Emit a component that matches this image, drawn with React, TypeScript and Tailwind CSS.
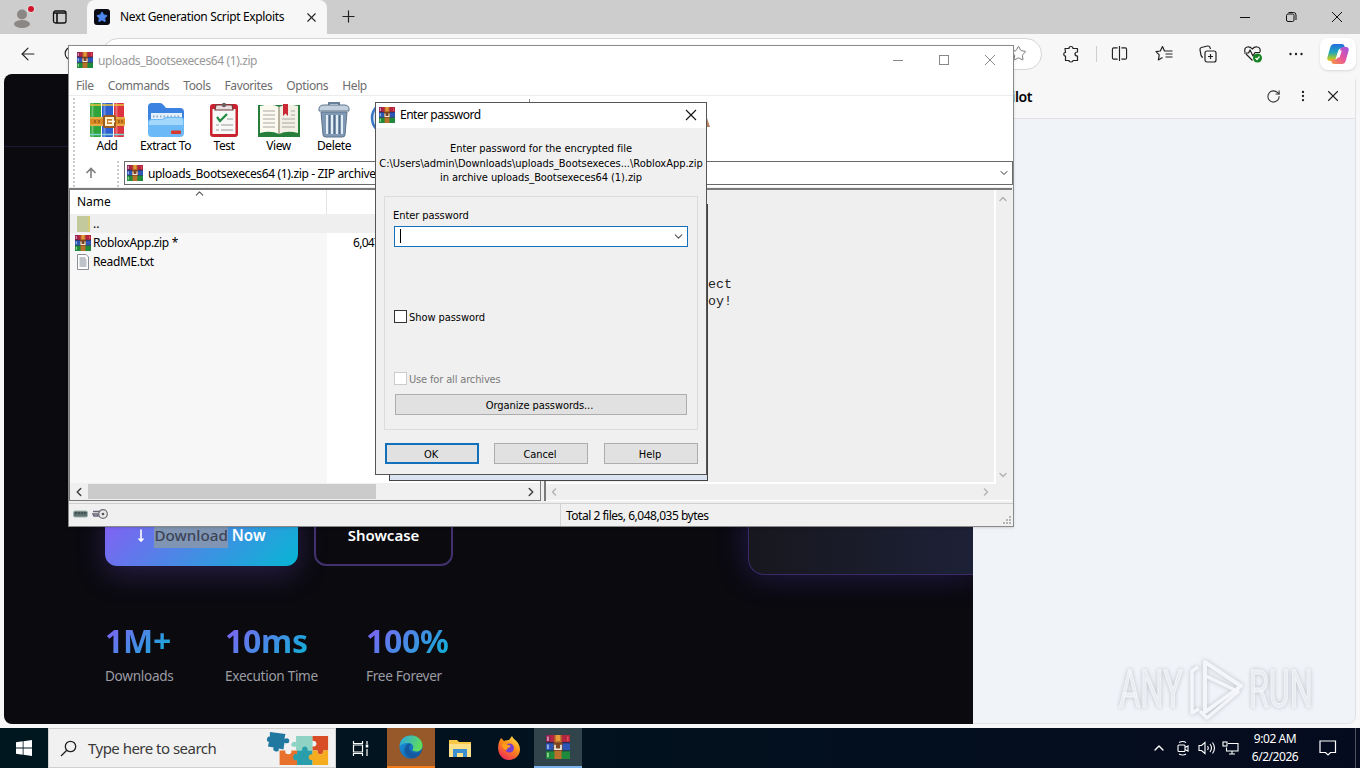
import React from 'react';
import { Star, X, Plus, ArrowLeft, ChevronDown, ChevronUp, ChevronLeft, ChevronRight, RotateCw, EllipsisVertical } from 'lucide-react';

interface IconProps {
  className?: string;
}

const RarIcon: React.FC<IconProps> = ({ className }) => (
  <svg viewBox="0 0 16 16" className={className}>
    <rect x="0" y="0" width="16" height="5" fill="#b3263f" />
    <rect x="0" y="5" width="16" height="5.5" fill="#2c55b5" />
    <rect x="0" y="10.5" width="16" height="5.5" fill="#1f8a3c" />
    <rect x="0" y="0" width="3" height="5" fill="#8f2157" />
    <rect x="0" y="4.8" width="16" height="0.7" fill="#23233f" />
    <rect x="0" y="10.2" width="16" height="0.7" fill="#173a3a" />
    <rect x="0.8" y="1" width="1" height="3" fill="#e9a9b5" />
    <rect x="0.8" y="6.3" width="1" height="3" fill="#a9c6f5" />
    <rect x="0.8" y="11.8" width="1" height="3" fill="#a6e0a0" />
    <rect x="14" y="1" width="1" height="3.2" fill="#e04b57" />
    <rect x="5.6" y="0" width="4.8" height="16" fill="#b8702a" />
    <rect x="6.6" y="0" width="2.8" height="4" fill="#e49a35" />
    <rect x="5" y="5" width="6" height="5.6" fill="#7c4522" />
    <path d="M6 6.500v3h4v-3" fill="none" stroke="#f3eee2" strokeWidth="1.100" />
  </svg>
);

const BooksIcon = () => (
  <svg viewBox="0 0 36 36" className="h-9 w-9">
    <rect x="1" y="1" width="11" height="34" rx="1" fill="#2fa43a" />
    <rect x="13" y="1" width="11" height="34" rx="1" fill="#2c5fd0" />
    <rect x="25" y="1" width="10" height="34" rx="1" fill="#dd3340" />
    <path d="M3.500 1v34M27.500 1v34M15.500 1v34" stroke="#fff" strokeOpacity=".3" strokeWidth="2" />
    <path d="M1 3h11M25 3h10M13 3h11" stroke="#e8c33b" strokeWidth="1.600" />
    <path d="M1 32.500h11M13 32.500h11M25 32.500h10" stroke="#7fd2d8" strokeWidth="1.600" />
    <rect x="1" y="15" width="35" height="9" rx="1" fill="#d98a26" />
    <path d="M1 16h35M1 23h35" stroke="#f6c860" strokeWidth="1.200" />
    <rect x="14" y="13" width="13" height="13" rx="2" fill="#9a5b1c" />
    <rect x="17" y="16" width="7" height="7" fill="#c47d28" stroke="#fff3cf" strokeWidth="2" />
    <path d="M19 19.500h7" stroke="#fff8e8" strokeWidth="1.600" />
    <path d="M6 18v3M10 18v3M30 18v3M33 18v3" stroke="#7b4512" strokeWidth="1" />
  </svg>
);

const ExtractIcon = () => (
  <svg viewBox="0 0 38 36" className="h-9 w-[38px]">
    <path d="M1 5q0-4 4-4h8q2 0 3.500 2L19 6h14q4 0 4 4v12H1z" fill="#3c82e0" />
    <path d="M4 11h31v10H4z" fill="#e3f0fb" />
    <path d="M6 14.500h27" stroke="#8ba9c9" strokeWidth="2" strokeDasharray="1.500 2" />
    <path d="M1 20q0-3 3-3h11l4-2h15q3 0 3 3v13q0 4-4 4H5q-4 0-4-4z" fill="#6cb9f7" />
    <path d="M2 21q0-3 3-3h10l5-2h13q3 0 3 3v4H2z" fill="#a3d8fc" />
    <rect x="24" y="28.500" width="10" height="3.500" rx="1" fill="#d8392f" />
  </svg>
);

const TestIcon = () => (
  <svg viewBox="0 0 30 36" className="h-9 w-[30px]">
    <rect x="1" y="2" width="28" height="33" rx="3" fill="#c9222f" />
    <rect x="3.500" y="7" width="23" height="25" fill="#f8f8f6" />
    <path d="M7 3h16l1 5H6z" fill="#e9dede" stroke="#6a3a40" strokeWidth="1.200" />
    <circle cx="15" cy="3" r="2.200" fill="#6d6060" />
    <path d="M8 15l3 4 7-7" fill="none" stroke="#248b45" strokeWidth="2.200" />
    <path d="M18 17h6M7 23h3M12 23h12M7 28h3M12 28h12" stroke="#9a9a9a" strokeWidth="1.200" />
  </svg>
);

const ViewIcon = () => (
  <svg viewBox="0 0 44 36" className="h-9 w-11">
    <path d="M1 3h42v32H1z" fill="#257f3a" />
    <path d="M3 4q12-3 19 1v27q-8-4-19-1z" fill="#fbf9f0" />
    <path d="M41 4q-12-3-19 1v27q8-4 19-1z" fill="#f2efe4" />
    <path d="M22 5v27" stroke="#a39c88" strokeWidth="1.500" />
    <path d="M6 9h12M6 13h12M6 17h12M6 21h12M6 25h12M25 17h13M25 21h13M25 25h13M34 9h4M34 13h4" stroke="#a8a8a4" strokeWidth="1" />
    <path d="M26 2h5v12l-2.500-2.500L26 14z" fill="#c92a36" />
  </svg>
);

const DeleteIcon = () => (
  <svg viewBox="0 0 32 36" className="h-9 w-8">
    <path d="M11 4V1h10v3" fill="none" stroke="#69809b" strokeWidth="2" />
    <path d="M1 7q0-4 5-4h20q5 0 5 4v2H1z" fill="#c3d1de" stroke="#5e748e" />
    <path d="M3 10h26l-2 23q0 2-3 2H8q-3 0-3-2z" fill="#7f99b5" stroke="#5e748e" />
    <path d="M9 13v19M14 13v19M19 13v19M24 13v19" stroke="#e3edf6" strokeWidth="2" />
    <path d="M11.500 13v19M16.500 13v19M21.500 13v19" stroke="#536a84" strokeWidth="1.200" />
  </svg>
);

const CopilotIcon = () => (
  <svg viewBox="0 0 24 24" className="h-6 w-6">
    <defs>
      <linearGradient id="cpA" x1="0" y1="0" x2="0" y2="1">
        <stop offset="0" stopColor="#1f6fe0" />
        <stop offset=".5" stopColor="#24a7b8" />
        <stop offset=".8" stopColor="#9ac43a" />
        <stop offset="1" stopColor="#f2c51d" />
      </linearGradient>
      <linearGradient id="cpB" x1="1" y1="0" x2="0" y2="1">
        <stop offset="0" stopColor="#9a55e8" />
        <stop offset=".5" stopColor="#e8549c" />
        <stop offset="1" stopColor="#f79a3e" />
      </linearGradient>
    </defs>
    <path d="M8 2h8q2 0 2.500 2l.7 2.500H15q-2 0-2.700 2l-2.500 8Q9 19 7 19H4q-3.500 0-2.500-4l2.700-9.500Q5.200 2 8 2z" fill="url(#cpA)" />
    <path d="M16 22H8q-2 0-2.500-2L5 17.500h4q2 0 2.700-2l2.500-8Q15 5 17 5h3q3.500 0 2.500 4l-2.700 9.500Q18.800 22 16 22z" fill="url(#cpB)" />
    <path d="M12.800 8.500h3l-2.200 7h-3z" fill="#fff" />
  </svg>
);

const EdgeIcon = () => (
  <svg viewBox="0 0 24 24" className="h-6 w-6">
    <defs>
      <linearGradient id="edA" x1="0" y1="0" x2="1" y2=".3">
        <stop offset="0" stopColor="#2aa5e8" />
        <stop offset="1" stopColor="#5fdc5c" />
      </linearGradient>
      <linearGradient id="edB" x1="0" y1="0" x2="1" y2="1">
        <stop offset="0" stopColor="#1b9de2" />
        <stop offset="1" stopColor="#1150a0" />
      </linearGradient>
    </defs>
    <circle cx="12" cy="12" r="11.500" fill="url(#edB)" />
    <path d="M.6 11Q1.500.5 12 .5c7 0 11.500 5 11.500 10 0 4-3 6-6.500 6-2.500 0-4-1-3.500-2 1.500-2 1-6-3.500-6.500C5.500 7.500 2 9 .6 11z" fill="url(#edA)" />
    <path d="M10 8.500c-4 1-6 7-3 11 2 3 6 4.500 9 3 3-1 5-3 6-5-4 2-9 1-11-2-1.500-2.500-1-5 1-6z" fill="#155a9f" />
  </svg>
);

const FirefoxIcon = () => (
  <svg viewBox="0 0 24 24" className="h-6 w-6">
    <defs>
      <linearGradient id="ffA" x1=".8" y1="0" x2=".2" y2="1">
        <stop offset="0" stopColor="#ffe14a" />
        <stop offset=".45" stopColor="#ff8a16" />
        <stop offset="1" stopColor="#ef2360" />
      </linearGradient>
    </defs>
    <path d="M2 6l2-4 3 3c2-1 4-1 5-1l3-4c1 3 4 4 6 7 5 8 0 17-9 17C4 24-1 16 2 6z" fill="url(#ffA)" />
    <circle cx="12.500" cy="12" r="4.500" fill="#7b3fd0" />
    <path d="M5 8c3-1 4 0 6 1 2 0 3 1 2 2-2 1-3 1-3 3-3 0-5-3-5-6z" fill="#ff9d1c" />
  </svg>
);

const PuzzlePicture = () => (
  <svg viewBox="0 0 66 38" className="h-[37px] w-16">
    <path d="M3 2l16 2-1 5q5-2 5 2t-5 2l-1 7-5-1q1 4-3 3t-2-4l-6-1 1-5q-3 0-2-3t3-2z" fill="#2077a0" />
    <path d="M30 6h17v15H30v-4q-5 1-5-2t5-3z" fill="#8fd3c4" />
    <path d="M47 6h16v15h-5q0 4-3 4t-3-4h-5v-4q4 0 4-3t-4-3z" fill="#d84c26" />
    <path d="M13 21h6q-1 4 3 4t3-4h6v15H13z" fill="#e8722c" />
    <path d="M31 21h5q0-4 3-4t3 4h5v15H31v-5q-4 1-4-3t4-3z" fill="#2a9eaa" />
    <path d="M47 21h5q0 4 3 4t3-4h5v15H47v-5q-4 0-4-3t4-3z" fill="#f5ad1f" />
  </svg>
);

const TabBar = () => (
  <div className="flex h-[34px] shrink-0 items-stretch bg-[#cdcdcd]">
    <div className="flex w-[87px] items-center pl-[12px]">
      <svg viewBox="0 0 24 24" className="h-6 w-6">
        <circle cx="10" cy="9.500" r="5" fill="#8b8785" />
        <ellipse cx="10" cy="19" rx="8" ry="4" fill="#8b8785" />
        <circle cx="19" cy="4" r="4" fill="#dcdcdc" />
        <circle cx="19" cy="4" r="3" fill="#d3142b" />
      </svg>
      <svg viewBox="0 0 16 16" className="ml-[16px] h-4 w-4" fill="none" stroke="#111" strokeWidth="1.300">
        <rect x="1.500" y="2" width="12.500" height="12" rx="2" />
        <path d="M1.500 4h12.500M5 4v10" strokeWidth="1.600" />
      </svg>
    </div>
    <div className="flex w-[240px] items-center rounded-t-lg bg-[#f7f7f7] pl-[7px] pr-[8px]">
      <div className="flex h-4 w-4 items-center justify-center rounded-[3px] bg-[#0b0b16]">
        <Star className="h-3 w-3 fill-[#4f86ef] text-[#4f86ef]" />
      </div>
      <span className="ml-[10px] whitespace-nowrap text-[12px] tracking-[-0.35px] text-black">Next Generation Script Exploits</span>
      <X className="ml-auto h-[15px] w-[15px] text-[#222]" strokeWidth={1.7} />
    </div>
    <Plus className="ml-[12px] mt-[7px] h-[19px] w-[19px] text-[#222]" strokeWidth={1.5} />
    <div className="ml-auto flex items-center gap-[34px] pr-[17px] text-[#111]">
      <svg viewBox="0 0 12 12" className="h-3 w-3" stroke="currentColor"><path d="M1 6.500h10" /></svg>
      <svg viewBox="0 0 12 12" className="h-3 w-3" fill="none" stroke="currentColor">
        <rect x="1.500" y="3" width="7.500" height="7.500" rx="1.500" />
        <path d="M3.500 1.500h5q2.500 0 2.500 2.500v5" />
      </svg>
      <svg viewBox="0 0 12 12" className="h-3 w-3" stroke="currentColor"><path d="M1 1l10 10M11 1L1 11" /></svg>
    </div>
  </div>
);

const AddressBar = () => (
  <div className="flex h-[39px] shrink-0 items-center bg-[#f7f7f7]">
    <ArrowLeft className="ml-[18px] h-5 w-5 text-[#222]" strokeWidth={1.4} />
    <RotateCw className="ml-[25px] h-[17px] w-[17px] text-[#222]" strokeWidth={1.6} />
    <div className="ml-[22px] flex h-[32px] w-[940px] items-center justify-end rounded-full border border-[#d6d6d6] bg-white pr-[14px]">
      <Star className="h-[17px] w-[17px] text-[#777]" strokeWidth={1.4} />
    </div>
    <div className="ml-auto flex items-center pr-[4px] text-[#222]">
      <svg viewBox="0 0 18 18" className="h-[18px] w-[18px]" fill="none" stroke="currentColor" strokeWidth="1.200">
        <path d="M2 3.500h4Q6 1.500 8 1.500t2 2h4.500V7Q12 7 12 9t2.500 2v4.500H10q0 1.500-2 1.500t-2-1.500H2.500V11Q.8 11 .8 9.200T2.500 7.500z" strokeLinejoin="round" />
      </svg>
      <div className="ml-[15px] mr-[14px] h-4 w-px bg-[#cfcfcf]" />
      <svg viewBox="0 0 18 18" className="h-[17px] w-[17px]" fill="none" stroke="currentColor" strokeWidth="1.200">
        <path d="M7 3H3Q1.500 3 1.500 4.500v9Q1.500 15 3 15h4M11 3h4q1.500 0 1.500 1.500v9Q16.500 15 15 15h-4M9 1v16" />
      </svg>
      <svg viewBox="0 0 18 18" className="ml-[27px] h-[18px] w-[18px]" fill="none" stroke="currentColor" strokeWidth="1.200">
        <path d="M11 6H9.500L7.500 1.500 5.300 6 1 6.700l3.200 3.200-.8 5 4.100-2.300M10.500 9h7M10.500 12h7M11 6h6.500" strokeLinejoin="round" />
      </svg>
      <svg viewBox="0 0 18 18" className="ml-[26px] h-[18px] w-[18px]" fill="none" stroke="currentColor" strokeWidth="1.200">
        <rect x="6" y="6" width="11" height="11" rx="2" />
        <path d="M11.500 9v5M9 11.500h5M4 12.500q-1.500-.5-1.900-2L1 4.800Q.8 3 2.400 2.500L8.500 1q2-.2 2.500 1.500l.5 1.500" />
      </svg>
      <svg viewBox="0 0 20 18" className="ml-[26px] h-[18px] w-5" fill="none" stroke="currentColor" strokeWidth="1.200">
        <path d="M9.500 15.500L3 9M2 7Q.8 3 4.300 2q3-.5 5 2 2.300-2.800 5.200-2Q18 3 17 7M1 8h4.500L7 5l3 6 2-3.500h5" strokeLinejoin="round" />
        <circle cx="14.500" cy="13" r="4.500" fill="#168423" stroke="none" />
        <path d="M12.500 13l1.500 1.500 2.500-3" stroke="#fff" />
      </svg>
      <svg viewBox="0 0 16 16" className="ml-[25px] h-4 w-4" fill="currentColor">
        <circle cx="2.500" cy="8" r="1.200" /><circle cx="8" cy="8" r="1.200" /><circle cx="13.500" cy="8" r="1.200" />
      </svg>
      <div className="ml-[16px] flex h-[32px] w-[36px] items-center justify-center rounded-lg bg-white shadow">
        <CopilotIcon />
      </div>
    </div>
  </div>
);

interface StatProps {
  value: string;
  label: string;
  className: string;
}

const Stat: React.FC<StatProps> = ({ value, label, className }) => (
  <div className={className}>
    <div className="w-fit bg-[linear-gradient(135deg,#8b5cf6,#06b6d4)] bg-clip-text text-[32px] font-bold leading-[44px] tracking-[-0.3px] text-transparent">
      {value}
    </div>
    <div className="mt-px text-[13.6px] leading-6 tracking-[-0.3px] text-[#9c9ca4]">{label}</div>
  </div>
);

const WebPage = () => (
  <div className="flex h-[650px] w-[969px] flex-col overflow-hidden rounded-l-lg bg-[#0a0a0f]">
    <div className="h-[73px] shrink-0 border-b border-[#1b1a38]" />
    <div className="flex">
      <div className="pl-[101px] pt-[360px]">
        <div className="flex gap-4">
          <div className="flex h-[59px] w-[193px] items-center justify-center whitespace-nowrap rounded-xl bg-[linear-gradient(135deg,#8b5cf6,#06b6d4)] pb-[2px] text-[15.2px] font-semibold text-white shadow-[0_8px_30px_rgba(139,92,246,0.25)]">
            <svg viewBox="0 0 8 16" className="mr-[9px] h-4 w-2" fill="none" stroke="#fff" strokeWidth="1.600">
              <path d="M4 1.500V13M1.500 10.500L4 13l2.500-2.500" />
            </svg>
            <span className="bg-[#8095b4] font-medium leading-[25px] text-[#3b4456]">Download</span>
            <span className="ml-1">Now</span>
          </div>
          <div className="flex h-[59px] w-[139px] items-center justify-center rounded-xl border-2 border-[#41316f] pb-[2px] text-[15px] font-semibold text-white">Showcase</div>
        </div>
        <div className="flex pt-[53px]">
          <Stat value="1M+" label="Downloads" className="w-[120px]" />
          <Stat value="10ms" label="Execution Time" className="w-[141px]" />
          <Stat value="100%" label="Free Forever" className="w-[120px]" />
        </div>
      </div>
      <div className="ml-auto h-[428px] w-[225px] shrink-0 rounded-bl-[16px] border-b border-l border-[#3a2b68] bg-gradient-to-r from-[#17171e] to-[#1d2137] shadow-[0_0_30px_rgba(91,60,200,0.35)]" />
    </div>
  </div>
);

const SidePanel = () => (
  <div className="flex h-[650px] w-[383px] flex-col rounded-r-lg border-r border-b border-[#e0e2e6] bg-[#f0f3f8]">
    <div className="flex h-[45px] items-center border-b border-[#e2e2e4] bg-[#f7f7f7] pl-[13px] pr-[13px]">
      <span className="text-[14px] font-semibold tracking-[-0.35px] text-black">Copilot</span>
      <RotateCw className="ml-auto h-[15px] w-[15px] text-[#333]" strokeWidth={1.7} />
      <EllipsisVertical className="ml-[15px] h-[14px] w-[14px] text-[#222]" />
      <X className="ml-[14px] h-[18px] w-[18px] text-[#222]" strokeWidth={1.5} />
    </div>
  </div>
);

const Taskbar = () => (
  <div className="flex h-10 shrink-0 items-center bg-gradient-to-r from-[#00171f] to-[#050b1e] text-white">
    <div className="flex w-12 justify-center">
      <svg viewBox="0 0 16 16" className="h-4 w-4" fill="#fff">
        <path d="M0 2.300l6.700-1v6.300H0zM7.500 1.200L16 0v7.600H7.500zM0 8.400h6.700v6.300l-6.700-1zM7.500 8.400H16V16l-8.500-1.200z" />
      </svg>
    </div>
    <div className="flex h-10 w-[288px] items-center border border-[#d0d0d0] bg-[#f1f1f1] pl-[11px]">
      <svg viewBox="0 0 17 17" className="h-[17px] w-[17px]" fill="none" stroke="#222" strokeWidth="1.300">
        <circle cx="10.500" cy="6.500" r="5.200" />
        <path d="M6.800 10.200L1 16" />
      </svg>
      <span className="ml-[11px] whitespace-nowrap text-[15px] tracking-[-0.52px] text-[#3a3a3a]">Type here to search</span>
      <div className="ml-auto pr-[4px]"><PuzzlePicture /></div>
    </div>
    <div className="flex h-10 w-[51px] items-center justify-center pr-[2px]">
      <svg viewBox="0 0 17 17" className="h-[17px] w-[17px]" fill="none" stroke="#fff" strokeWidth="1.200">
        <path d="M1.500 1v2.500h9V1M1.500 16v-2.500h9V16M1.500 5h9v7h-9zM15 1v3M15 9v7" />
        <path d="M15 4.500v3" strokeWidth="2.500" />
      </svg>
    </div>
    <div className="flex h-10 w-12 items-center justify-center border-b-2 border-[#f07a1a] bg-[#98592a]"><EdgeIcon /></div>
    <div className="flex h-10 w-[49px] items-center justify-center">
      <svg viewBox="0 0 22 18" className="h-[18px] w-[22px]">
        <path d="M0 1h8l2 2h12v15H0z" fill="#f9c846" />
        <path d="M0 5h22v13H0z" fill="#fde08a" />
        <path d="M4 10h14v8h-4v-4H8v4H4z" fill="#3d8fd0" />
      </svg>
    </div>
    <div className="flex h-10 w-[50px] items-center justify-center"><FirefoxIcon /></div>
    <div className="flex h-10 w-12 items-center justify-center border-b-2 border-[#7ab4ea] bg-[#31444c]"><RarIcon className="h-6 w-6" /></div>
    <div className="ml-auto flex items-center">
      <ChevronUp className="h-4 w-4" strokeWidth={2} />
      <svg viewBox="0 0 16 16" className="ml-[8px] h-4 w-4" fill="none" stroke="#fff" strokeWidth="1.100">
        <rect x="3" y="5" width="7" height="6.500" rx="1" />
        <path d="M10 7.500l3-1.500v5l-3-1.500M4 2.500q4-2 7 0M4 14q4 2 7 0" />
      </svg>
      <svg viewBox="0 0 18 16" className="ml-[7px] h-4 w-[18px]" fill="none" stroke="#fff" strokeWidth="1.100">
        <path d="M1 5.500h2.500L7 2.500v11L3.500 10.500H1zM9.500 6q1.500 2 0 4M12 4q3 4 0 8M14.500 2.500q4 5.500 0 11" />
      </svg>
      <svg viewBox="0 0 17 16" className="ml-[6px] h-4 w-[17px]" fill="none" stroke="#fff" strokeWidth="1.100">
        <path d="M6 3.500h10v7.500H4.500V7.500M7 14h6M10 11v3" />
        <rect x="1" y="2" width="4" height="4" />
      </svg>
      <div className="ml-[6px] w-[60px] text-center text-[12px] leading-[18px] tracking-[-0.45px]">
        <div>9:02 AM</div>
        <div>6/2/2026</div>
      </div>
      <svg viewBox="0 0 18 18" className="ml-[14px] mr-[18px] h-[18px] w-[18px]" fill="none" stroke="#fff" strokeWidth="1.200">
        <path d="M1 2h15.500v11.500h-5L9 16l-2.500-2.500H1z" />
      </svg>
      <div className="h-10 w-px bg-[#4d525e]" />
      <div className="w-[4px]" />
    </div>
  </div>
);

const menus = ['File', 'Commands', 'Tools', 'Favorites', 'Options', 'Help'];

const tools = [
  { label: 'Add', icon: <BooksIcon />, width: 'w-[58px]' },
  { label: 'Extract To', icon: <ExtractIcon />, width: 'w-[59px]' },
  { label: 'Test', icon: <TestIcon />, width: 'w-[58px]' },
  { label: 'View', icon: <ViewIcon />, width: 'w-[51px]' },
  { label: 'Delete', icon: <DeleteIcon />, width: 'w-[60px]' },
];

const ArchiveWindow = () => (
  <div className="absolute left-[68px] top-[45px] flex h-[482px] w-[946px] flex-col border border-[#8a8a8a] bg-white shadow-sm">
    <div className="flex h-[30px] shrink-0 items-center pl-[8px] pr-[17px]">
      <RarIcon className="mb-[2px] h-4 w-4" />
      <span className="ml-[5px] text-[12px] tracking-[-0.4px] text-[#999]">uploads_Bootsexeces64 (1).zip</span>
      <div className="ml-auto flex items-center gap-[34px] pb-[2px] text-[#888]">
        <svg viewBox="0 0 12 12" className="h-3 w-3" stroke="currentColor"><path d="M1 6.500h10" /></svg>
        <svg viewBox="0 0 12 12" className="h-3 w-3" fill="none" stroke="currentColor"><rect x="1.500" y="1.500" width="9" height="9" /></svg>
        <svg viewBox="0 0 12 12" className="h-3 w-3" stroke="currentColor"><path d="M1 1l10 10M11 1L1 11" /></svg>
      </div>
    </div>
    <div className="flex h-[20px] shrink-0 items-center gap-[14px] border-b border-[#ececec] pl-[7px] text-[12px] tracking-[-0.38px] text-[#6d6d6d]">
      {menus.map((m) => <span key={m}>{m}</span>)}
    </div>
    <div className="flex h-[64px] shrink-0 items-start pl-[4px]">
      <div className="mt-[2px] h-[62px] border-l-2 border-dotted border-[#ccc]" />
      <div className="ml-[3px] flex pt-[6px]">
        {tools.map((t) => (
          <div key={t.label} className={`flex flex-col items-center ${t.width}`}>
            {t.icon}
            <span className="whitespace-nowrap text-[12px] leading-[16px] tracking-[-0.4px] text-black">{t.label}</span>
          </div>
        ))}
        <svg viewBox="0 0 36 36" className="ml-[6px] h-9 w-9">
          <circle cx="18" cy="16" r="16" fill="#d5e6f8" stroke="#3b76c4" strokeWidth="2.500" />
        </svg>
      </div>
      <div className="ml-[123px] mt-[3px] h-[60px] w-px bg-[#8a8a8a]" />
      <svg viewBox="0 0 26 30" className="ml-[154px] mt-[7px] h-[30px] w-[26px]">
        <path d="M18 0l8 24H0z" fill="#bb8064" />
      </svg>
    </div>
    <div className="flex h-[27px] shrink-0 items-center">
      <div className="ml-[4px] h-[26px] border-l-2 border-dotted border-[#ccc]" />
      <svg viewBox="0 0 12 12" className="mb-[2px] ml-[10px] h-3 w-3" fill="none" stroke="#7d7d7d" strokeWidth="1.600">
        <path d="M6 11V1.500M1.500 6L6 1.500 10.500 6" />
      </svg>
      <div className="ml-[20px] h-[26px] border-l-2 border-dotted border-[#ccc]" />
      <div className="mb-[2px] ml-[5px] flex h-[24px] flex-1 items-center border border-[#6a6a6a] pl-[2px] pr-[2px]">
        <RarIcon className="h-4 w-4" />
        <span className="ml-[5px] whitespace-nowrap pt-[2px] text-[12px] tracking-[-0.35px] text-black">uploads_Bootsexeces64 (1).zip - ZIP archive</span>
        <ChevronDown className="ml-auto h-3 w-3 text-[#333]" strokeWidth={2} />
      </div>
    </div>
    <div className="flex h-[316px] shrink-0 bg-[#efefef] pb-[2px] pr-px pt-px">
      <div className="flex w-[472px] flex-col border-2 border-b border-l border-r border-[#7a7a7a] bg-white">
        <div className="flex h-[24px] shrink-0">
          <div className="flex w-[257px] items-center border-r border-[#e4e4e4] pl-[7px]">
            <span className="text-[12px] text-black">Name</span>
            <ChevronUp className="mb-[18px] ml-[82px] h-[13px] w-[13px] text-[#555]" strokeWidth={2} />
          </div>
        </div>
        <div className="flex h-[19px] shrink-0 items-center bg-[#efefef] pl-[7px]">
          <div className="h-4 w-[13px] border-r-2 border-[#d5cc79] bg-[#c3c99c]" />
          <span className="ml-[3px] text-[12px] text-black">..</span>
        </div>
        <div className="flex min-h-0 flex-1">
          <div className="w-[257px] bg-[#f7f7f7] text-[12px] tracking-[-0.34px] text-black">
            <div className="flex h-[19px] items-center pl-[5px]">
              <RarIcon className="h-4 w-4" />
              <span className="ml-[2px]">RobloxApp.zip *</span>
            </div>
            <div className="flex h-[19px] items-center pl-[7px]">
              <svg viewBox="0 0 12 16" className="h-4 w-3">
                <path d="M.5.5H9L11.500 3v12.500H.5z" fill="#fff" stroke="#8a8f94" />
                <path d="M2.500 4h6M2.500 6h7M2.500 8h7M2.500 10h7M2.500 12h7" stroke="#6e7a88" strokeWidth=".9" />
              </svg>
              <span className="ml-[4px]">ReadME.txt</span>
            </div>
          </div>
          <div className="pl-[26px] text-[12px] leading-[19px] tracking-[-0.7px] text-black">6,047</div>
        </div>
        <div className="flex h-[17px] shrink-0 items-center bg-[#f0f0f0] text-[#444]">
          <ChevronLeft className="ml-[2px] h-[14px] w-[14px]" strokeWidth={2.6} />
          <div className="ml-[2px] h-[15px] w-[288px] bg-[#cbcbcb]" />
          <ChevronRight className="ml-auto mr-[2px] h-[14px] w-[14px]" strokeWidth={2.6} />
        </div>
      </div>
      <div className="ml-[3px] flex flex-1 flex-col border-l-2 border-t-2 border-[#7a7a7a] bg-[#efefef] text-[#b4b4b4]">
        <div className="flex min-h-0 flex-1">
          <div className="flex-1 border-b-2 border-r-2 border-white pl-[162px] pt-[86px] font-['Liberation_Mono'] text-[13.3px] leading-[17px] text-[#222]">
            <div>ect</div>
            <div>oy!</div>
          </div>
          <div className="flex w-[16px] flex-col items-center justify-between pb-[3px] pr-[3px] pt-[3px]">
            <ChevronUp className="h-3 w-3" strokeWidth={3} />
            <ChevronDown className="h-3 w-3" strokeWidth={3} />
          </div>
        </div>
        <div className="flex h-[17px] items-center justify-between border-b border-white pl-[2px] pr-[20px]">
          <ChevronLeft className="h-3 w-3" strokeWidth={3} />
          <ChevronRight className="h-3 w-3" strokeWidth={3} />
        </div>
      </div>
    </div>
    <div className="flex min-h-0 flex-1 items-center border-t border-[#cfcfcf] bg-[#f0f0f0] pl-[4px]">
      <svg viewBox="0 0 36 10" className="mb-[2px] h-[10px] w-9">
        <rect x=".5" y="2" width="14" height="6" rx="1.500" fill="#5f7070" stroke="#9fb0ae" />
        <path d="M2 4h11" stroke="#273232" strokeDasharray="2 1" />
        <path d="M20 2.500h8M20 5h5v2h-4z" fill="none" stroke="#667" strokeWidth="1.500" />
        <circle cx="30" cy="5" r="4.300" fill="#e9e9e9" stroke="#6d6d73" strokeWidth="1.200" />
        <circle cx="30" cy="5" r="1.300" fill="#555" />
      </svg>
      <div className="h-full w-[452px] border-r border-[#d4d4d4]" />
      <span className="ml-[5px] pt-[2px] text-[12px] tracking-[-0.49px] text-black">Total 2 files, 6,048,035 bytes</span>
      <svg viewBox="0 0 10 10" className="ml-auto mr-px mt-[10px] h-[10px] w-[10px]" fill="#b5b5b5">
        <path d="M7 1h2v2H7zM4 4h2v2H4zM7 4h2v2H7zM1 7h2v2H1zM4 7h2v2H4zM7 7h2v2H7z" />
      </svg>
    </div>
  </div>
);

interface ButtonProps {
  children: React.ReactNode;
  focused?: boolean;
}

const DialogButton: React.FC<ButtonProps> = ({ children, focused }) => (
  <button className={`flex h-[21px] w-[94px] items-center justify-center bg-[#e1e1e1] pr-[2px] pt-[2px] leading-[15px] ${focused ? 'border-2 border-[#1371bb]' : 'border border-[#adadad]'}`}>
    {children}
  </button>
);

const PasswordDialog = () => (
  <div className="absolute left-[375px] top-[102px] flex h-[373px] w-[332px] flex-col border border-[#555] bg-[#f0f0f0] font-['DejaVu_Sans_Condensed','DejaVu_Sans',sans-serif] text-[11px] tracking-[-0.07px] text-black">
    <div className="flex h-[25px] shrink-0 items-center bg-white pl-[3px] pr-[9px]">
      <RarIcon className="mb-px h-4 w-4" />
      <span className="mb-px ml-[5px] font-['Noto_Sans'] text-[12px] tracking-[-0.5px]">Enter password</span>
      <svg viewBox="0 0 12 12" className="mb-px ml-auto h-3 w-3" stroke="#111" strokeWidth="1.100"><path d="M1 1l10 10M11 1L1 11" /></svg>
    </div>
    <div className="flex flex-col items-center whitespace-nowrap pt-[14px] leading-[14.500px]">
      <div>Enter password for the encrypted file</div>
      <div className="tracking-[-0.03px]">C:\Users\admin\Downloads\uploads_Bootsexeces...\RobloxApp.zip</div>
      <div>in archive uploads_Bootsexeces64 (1).zip</div>
    </div>
    <div className="mx-[8px] mt-[10px] flex h-[234px] shrink-0 flex-col border border-[#dcdcdc] pl-[8px]">
      <span className="mt-[12px] leading-[14px]">Enter password</span>
      <div className="ml-px mt-[3px] flex h-[21px] w-[294px] items-center border border-[#1371bb] bg-white pl-[5px] pr-[2px]">
        <div className="h-[14px] w-px bg-black" />
        <ChevronDown className="ml-auto h-[13px] w-[13px] text-[#555]" strokeWidth={2} />
      </div>
      <div className="ml-px mt-[63px] flex items-center">
        <div className="h-[13px] w-[13px] border border-[#333] bg-white" />
        <span className="ml-[2px] pt-px leading-[13px]">Show password</span>
      </div>
      <div className="ml-px mt-[48px] flex items-center tracking-[-0.15px] text-[#7b7b7b]">
        <div className="h-[13px] w-[13px] border border-[#ccc] bg-white" />
        <span className="ml-[2px] pt-px leading-[13px]">Use for all archives</span>
      </div>
      <button className="ml-[2px] mt-[8px] flex h-[21px] w-[292px] items-center justify-center border border-[#adadad] bg-[#e1e1e1] pr-[3px] pt-[2px] leading-[15px]">Organize passwords...</button>
    </div>
    <div className="mt-[13px] flex gap-[15px] pl-[9px]">
      <DialogButton focused>OK</DialogButton>
      <DialogButton>Cancel</DialogButton>
      <div className="pl-px"><DialogButton>Help</DialogButton></div>
    </div>
  </div>
);

const Watermark = () => (
  <div className="absolute left-[1119px] top-[657px] flex h-[66px] w-[194px] items-center font-[Roboto] text-[52px] leading-none text-[#e9ecf0] drop-shadow-[0_0_2px_rgba(110,115,125,0.4)]">
    <span className="w-[65px] origin-left scale-x-[0.63] [-webkit-text-stroke:1px_#f6f8fa]">ANY</span>
    <svg viewBox="0 0 60 64" className="ml-[3px] h-16 w-[60px]" fill="none" stroke="#f4f6f9" strokeWidth="4" strokeLinejoin="round">
      <path d="M18 4l36 24L18 54z" />
      <path d="M11 9L5 13v42l7-4M13 53l7 7 32-27M19 18l33 16" strokeWidth="3.500" />
    </svg>
    <span className="ml-[2px] w-[62px] origin-left scale-x-[0.62] [-webkit-text-stroke:1px_#f6f8fa]">RUN</span>
  </div>
);

export default function App() {
  return (
    <div className="relative flex h-[768px] w-[1360px] flex-col overflow-hidden bg-[#f7f7f7] font-['Noto_Sans','Open_Sans',sans-serif]">
      <TabBar />
      <AddressBar />
      <div className="flex h-[655px] shrink-0 pl-[4px] pt-px">
        <WebPage />
        <SidePanel />
      </div>
      <Taskbar />
      <ArchiveWindow />
      <div className="absolute left-[389px] top-[204px] h-[277px] w-[319px] border border-[#444] bg-[#dbe3f3]" />
      <PasswordDialog />
      <Watermark />
    </div>
  );
}
